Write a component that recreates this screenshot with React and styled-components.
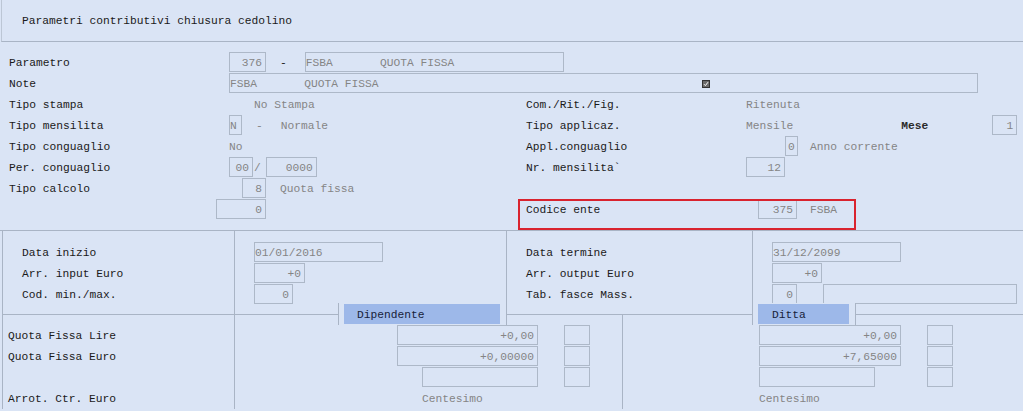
import React from "react";
import styled, { createGlobalStyle } from "styled-components";

const BG = "#dae4f5";
const LINE = "#a9b4c5";
const BOX = "#adb8c8";
const VALUE = "#858585";
const LABEL = "#1a1a1a";

const Global = createGlobalStyle`
  html, body { margin: 0; padding: 0; background: ${BG}; }
  body { font-family: "Liberation Mono", "Courier New", monospace; font-size: 11.25px; }
`;

const Screen = styled.div`
  position: relative;
  width: 1023px;
  height: 411px;
  overflow: hidden;
  background: ${BG};
  color: ${LABEL};
  font-family: "Liberation Mono", "Courier New", monospace;
  font-size: 11.25px;
  line-height: 20px;
  white-space: pre;
`;

const Header = styled.div`
  height: 41px;
  margin-left: 1px;
  border-left: 1px solid #bcc6d5;
  border-bottom: 1px solid ${LINE};
  padding-left: 20px;
  display: flex;
  align-items: center;
`;

const Main = styled.div`
  padding: 10px 0 10px 9px;
  border-bottom: 1px solid ${LINE};
  display: grid;
  grid-auto-rows: 21px;
`;

const Row = styled.div`
  display: grid;
  grid-template-columns: 220px 297px 220px 1fr;
  align-items: start;
`;

const Cell = styled.div`
  display: flex;
  align-items: flex-start;
  height: 20px;
  grid-column: ${(p) => p.$span || "auto"};
  padding-left: ${(p) => p.$pad || 0}px;
`;

const Label = styled.span`
  color: ${(p) => (p.$bold ? "#2a2a2a" : LABEL)};
  line-height: 20px;
  padding-top: 1px;
  font-weight: ${(p) => (p.$bold ? "bold" : "normal")};
  margin-left: ${(p) => p.$ml || 0}px;
`;

const Value = styled.span`
  color: ${VALUE};
  line-height: 20px;
  padding-top: 1px;
  margin-left: ${(p) => p.$ml || 0}px;
`;

const Box = styled.div`
  box-sizing: border-box;
  flex: none;
  width: ${(p) => p.$w}px;
  height: 20px;
  border: 1px solid ${BOX};
  color: ${VALUE};
  line-height: 16px;
  text-align: ${(p) => p.$align || "right"};
  padding: ${(p) => (p.$align === "left" || p.$align === "center" ? "1px 0 0 0" : "1px 3px 0 0")};
  margin-left: ${(p) => p.$ml || 0}px;
  overflow: hidden;
  display: flex;
  align-items: center;
  justify-content: ${(p) =>
    p.$align === "left" ? "flex-start" : p.$align === "center" ? "center" : "flex-end"};
`;

const Check = styled.svg`
  flex: none;
  margin-left: ${(p) => p.$ml}px;
`;

const Band = styled.div`
  margin-left: 2px;
  border-left: 1px solid ${LINE};
  display: grid;
  grid-template-columns: ${(p) => p.$cols};
  border-bottom: ${(p) => (p.$bottom ? `1px solid ${LINE}` : "none")};
`;

const Column = styled.div`
  border-right: ${(p) => (p.$last ? "none" : `1px solid ${LINE}`)};
  padding: ${(p) => p.$pt}px 0 ${(p) => p.$pb}px ${(p) => p.$pl}px;
  display: grid;
  grid-auto-rows: 21px;
  align-content: start;
`;

const Line = styled.div`
  display: flex;
  align-items: flex-start;
  height: 20px;
`;

const Stack = styled.div`
  display: grid;
  grid-template-columns: ${(p) => p.$wide}px 26px 26px;
  grid-auto-rows: 21px;
`;

const Slot = styled.div`
  display: flex;
  justify-content: ${(p) => (p.$end ? "flex-end" : "flex-start")};
  grid-column: ${(p) => p.$col || "auto"};
`;

const Legend = styled.div`
  position: absolute;
  top: 303px;
  left: ${(p) => p.$left}px;
  height: 22px;
  box-sizing: border-box;
  padding: 1px 6px 1px 5px;
  border-left: 1px solid ${LINE};
  border-right: 1px solid ${LINE};
  background: ${BG};
`;

const Tab = styled.div`
  width: ${(p) => p.$w}px;
  height: 20px;
  background: #9db8e9;
  color: #17223a;
  line-height: 20px;
  padding-top: 1px;
  padding-left: ${(p) => p.$pad}px;
  box-sizing: border-box;
`;

const Highlight = styled.div`
  position: absolute;
  left: 518px;
  top: 199px;
  width: 338px;
  height: 31px;
  box-sizing: border-box;
  border: 2px solid #d9232e;
  pointer-events: none;
`;

function CheckGlyph() {
  return (
    <Check $ml={323} width="8" height="8" viewBox="0 0 8 8">
      <rect x="0.5" y="0.5" width="7" height="7" fill="#6b6b6b" stroke="#333" />
      <path d="M2 4.2 L3.4 5.6 L6 2.2" fill="none" stroke="#fff" strokeWidth="1" />
    </Check>
  );
}

function AmountStack({ wide, values, thirdW, thirdEnd, indent }) {
  return (
    <Stack $wide={wide}>
      <Slot>
        <Box $w={wide}>{values[0]}</Box>
      </Slot>
      <Slot $col="3">
        <Box $w={26} />
      </Slot>
      <Slot>
        <Box $w={wide}>{values[1]}</Box>
      </Slot>
      <Slot $col="3">
        <Box $w={26} />
      </Slot>
      <Slot $end={thirdEnd}>
        <Box $w={thirdW} />
      </Slot>
      <Slot $col="3">
        <Box $w={26} />
      </Slot>
      <Slot>
        <Value $ml={indent}>Centesimo</Value>
      </Slot>
    </Stack>
  );
}

export default function App() {
  return (
    <>
      <Global />
      <Screen>
        <Header>Parametri contributivi chiusura cedolino</Header>

        <Main>
          <Row>
            <Cell><Label>Parametro</Label></Cell>
            <Cell $span="2 / -1">
              <Box $w={37}>376</Box>
              <Label $ml={14}>-</Label>
              <Box $w={259} $ml={18} $align="left">{"FSBA       QUOTA FISSA"}</Box>
            </Cell>
          </Row>
          <Row>
            <Cell><Label>Note</Label></Cell>
            <Cell $span="2 / -1">
              <Box $w={749} $align="left">
                {"FSBA       QUOTA FISSA"}
                <CheckGlyph />
              </Box>
            </Cell>
          </Row>
          <Row>
            <Cell><Label>Tipo stampa</Label></Cell>
            <Cell $pad={25}><Value>No Stampa</Value></Cell>
            <Cell><Label>Com./Rit./Fig.</Label></Cell>
            <Cell><Value>Ritenuta</Value></Cell>
          </Row>
          <Row>
            <Cell><Label>Tipo mensilita</Label></Cell>
            <Cell>
              <Box $w={13} $align="left">N</Box>
              <Value $ml={14}>-</Value>
              <Value $ml={18}>Normale</Value>
            </Cell>
            <Cell><Label>Tipo applicaz.</Label></Cell>
            <Cell>
              <Value>Mensile</Value>
              <Label $ml={108} $bold>Mese</Label>
              <Box $w={25} $ml={64}>1</Box>
            </Cell>
          </Row>
          <Row>
            <Cell><Label>Tipo conguaglio</Label></Cell>
            <Cell><Value>No</Value></Cell>
            <Cell><Label>Appl.conguaglio</Label></Cell>
            <Cell>
              <Box $w={13} $ml={39} $align="center">0</Box>
              <Value $ml={12}>Anno corrente</Value>
            </Cell>
          </Row>
          <Row>
            <Cell><Label>Per. conguaglio</Label></Cell>
            <Cell>
              <Box $w={24}>00</Box>
              <Value $ml={1}>/</Value>
              <Box $w={51} $ml={5}>0000</Box>
            </Cell>
            <Cell><Label>Nr. mensilita`</Label></Cell>
            <Cell><Box $w={39}>12</Box></Cell>
          </Row>
          <Row>
            <Cell><Label>Tipo calcolo</Label></Cell>
            <Cell>
              <Box $w={24} $ml={13}>8</Box>
              <Value $ml={14}>Quota fissa</Value>
            </Cell>
          </Row>
          <Row>
            <Cell />
            <Cell><Box $w={50} $ml={-13}>0</Box></Cell>
            <Cell><Label>Codice ente</Label></Cell>
            <Cell>
              <Box $w={39} $ml={12}>375</Box>
              <Value $ml={13}>FSBA</Value>
            </Cell>
          </Row>
        </Main>

        <Band $cols="232px 272px 246px 1fr" $bottom>
          <Column $pt={11} $pb={9} $pl={19}>
            <Line><Label>Data inizio</Label></Line>
            <Line><Label>Arr. input Euro</Label></Line>
            <Line><Label>Cod. min./max.</Label></Line>
          </Column>
          <Column $pt={11} $pb={9} $pl={19}>
            <Line><Box $w={129} $align="left">01/01/2016</Box></Line>
            <Line><Box $w={51}>+0</Box></Line>
            <Line><Box $w={39}>0</Box></Line>
          </Column>
          <Column $pt={11} $pb={9} $pl={19}>
            <Line><Label>Data termine</Label></Line>
            <Line><Label>Arr. output Euro</Label></Line>
            <Line><Label>Tab. fasce Mass.</Label></Line>
          </Column>
          <Column $pt={11} $pb={9} $pl={19} $last>
            <Line><Box $w={129} $align="left">31/12/2099</Box></Line>
            <Line><Box $w={50}>+0</Box></Line>
            <Line>
              <Box $w={25}>0</Box>
              <Box $w={194} $ml={26} />
            </Line>
          </Column>
        </Band>

        <Band $cols="232px 388px 1fr">
          <Column $pt={10} $pb={0} $pl={5}>
            <Line><Label>Quota Fissa Lire</Label></Line>
            <Line><Label>Quota Fissa Euro</Label></Line>
            <Line />
            <Line><Label>Arrot. Ctr. Euro</Label></Line>
          </Column>
          <Column $pt={10} $pb={0} $pl={162}>
            <AmountStack wide={141} values={["+0,00", "+0,00000"]} thirdW={116} thirdEnd indent={25} />
          </Column>
          <Column $pt={10} $pb={0} $pl={136} $last>
            <AmountStack wide={142} values={["+0,00", "+7,65000"]} thirdW={116} indent={0} />
          </Column>
        </Band>

        <Legend $left={338}>
          <Tab $w={156} $pad={13}>Dipendente</Tab>
        </Legend>
        <Legend $left={752}>
          <Tab $w={91} $pad={14}>Ditta</Tab>
        </Legend>

        <Highlight />
      </Screen>
    </>
  );
}
